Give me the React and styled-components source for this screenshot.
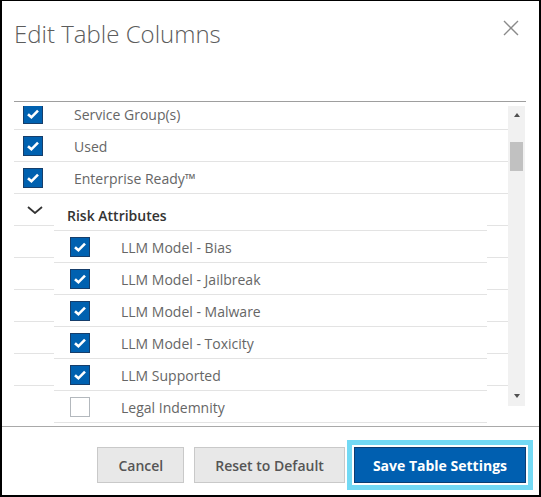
import styled, { createGlobalStyle } from 'styled-components';
import { useLayoutEffect, useRef } from 'react';

const GlobalStyle = createGlobalStyle`
  html, body {
    margin: 0;
    padding: 0;
    background: #fff;
  }
  body {
    font-family: "Open Sans", "Liberation Sans", sans-serif;
  }
`;

const topColumns = [
  { label: 'Service Group(s)', checked: true },
  { label: 'Used', checked: true },
  { label: 'Enterprise Ready™', checked: true },
];

const riskAttributes = [
  { label: 'LLM Model - Bias', checked: true },
  { label: 'LLM Model - Jailbreak', checked: true },
  { label: 'LLM Model - Malware', checked: true },
  { label: 'LLM Model - Toxicity', checked: true },
  { label: 'LLM Supported', checked: true },
  { label: 'Legal Indemnity', checked: false },
];

function CheckBox({ checked }) {
  return (
    <Box $checked={checked}>
      {checked && (
        <svg width="20" height="20" viewBox="0 0 20 20">
          <path d="M5 10.2 L8.4 13.3 L15 6.6" fill="none" stroke="#fff" strokeWidth="2.6" />
        </svg>
      )}
    </Box>
  );
}

export default function App() {
  const viewport = useRef();

  useLayoutEffect(() => {
    viewport.current.scrollTop = 8;
  }, []);

  return (<>
    <GlobalStyle />
    <Dialog>
      <Header>
        <Title>Edit Table Columns</Title>
        <CloseButton aria-label="Close">
          <svg width="16" height="16" viewBox="0 0 16 16">
            <path d="M1 1 L15 15 M15 1 L1 15" stroke="#8a8a8a" strokeWidth="1.4" fill="none" />
          </svg>
        </CloseButton>
      </Header>

      <ListWrap>
        <Viewport ref={viewport}>
          {topColumns.map((col) => (
            <Row key={col.label}>
              <CheckCell><CheckBox checked={col.checked} /></CheckCell>
              <Label>{col.label}</Label>
            </Row>
          ))}

          <Group>
            <SideCol $width={40}>
              <SideCell><Chevron /></SideCell>
              {riskAttributes.slice(1).map((a) => <SideCell key={a.label} />)}
              <SideCell $last />
            </SideCol>
            <GroupBody>
              <GroupHeader>Risk Attributes</GroupHeader>
              {riskAttributes.map((a) => (
                <ChildRow key={a.label}>
                  <CheckBox checked={a.checked} />
                  <Label>{a.label}</Label>
                </ChildRow>
              ))}
            </GroupBody>
            <SideCol $width={21}>
              <SideCell />
              {riskAttributes.slice(1).map((a) => <SideCell key={a.label} />)}
              <SideCell $last />
            </SideCol>
          </Group>
        </Viewport>

        <ScrollBar>
          <Arrow $dir="up" />
          <Thumb />
          <Arrow $dir="down" />
        </ScrollBar>
      </ListWrap>

      <Footer>
        <Button $pad={20}>Cancel</Button>
        <Button $pad={20}>Reset to Default</Button>
        <PrimaryButton $pad={18}>Save Table Settings</PrimaryButton>
      </Footer>
    </Dialog>
  </>);
}

function Chevron() {
  return (
    <svg width="16" height="8" viewBox="0 0 16 8">
      <path d="M1 1 L8 7 L15 1" fill="none" stroke="#333" strokeWidth="1.8" />
    </svg>
  );
}

const Dialog = styled.div`
  box-sizing: border-box;
  width: 541px;
  height: 497px;
  border: 2px solid #000;
  border-top-width: 1px;
  display: flex;
  flex-direction: column;
  background: #fff;
`;

const Header = styled.div`
  box-sizing: border-box;
  height: 100px;
  padding: 17px 20px 0 12px;
  display: flex;
  justify-content: space-between;
  align-items: flex-start;
`;

const Title = styled.h2`
  margin: 0;
  font-size: 24px;
  line-height: 32px;
  font-weight: 300;
  color: #5c5c5c;
`;

const CloseButton = styled.button`
  border: none;
  background: none;
  padding: 0;
  margin-top: 2px;
  width: 16px;
  height: 16px;
  cursor: pointer;
  display: flex;
`;

const ListWrap = styled.div`
  position: relative;
  margin: 0 13px 0 12px;
  padding-top: 4px;
  border-top: 1px solid #9e9e9e;
`;

const Viewport = styled.div`
  height: 320px;
  overflow-y: scroll;
  padding-right: 18px;
  padding-bottom: 32px;
  box-sizing: border-box;
  scrollbar-width: none;
  &::-webkit-scrollbar { display: none; }
`;

const Row = styled.div`
  box-sizing: border-box;
  height: 32px;
  display: flex;
  align-items: center;
  border-bottom: 1px solid #e3e3e3;
`;

const CheckCell = styled.div`
  width: 60px;
  padding-left: 9px;
  box-sizing: border-box;
  display: flex;
`;

const Label = styled.span`
  font-size: 14px;
  color: #666;
  padding-top: 2px;
`;

const Box = styled.span`
  box-sizing: border-box;
  width: 20px;
  height: 20px;
  flex: none;
  display: flex;
  align-items: center;
  justify-content: center;
  background: ${(p) => (p.$checked ? '#0061b0' : '#fff')};
  border: 1px solid ${(p) => (p.$checked ? '#163e6b' : '#b3b8bd')};
  svg { margin: -1px; }
`;

const Group = styled.div`
  display: flex;
`;

const SideCol = styled.div`
  width: ${(p) => p.$width}px;
  flex: none;
  display: flex;
  flex-direction: column;
`;

const SideCell = styled.div`
  box-sizing: border-box;
  height: ${(p) => (p.$last ? 'auto' : '32px')};
  flex: ${(p) => (p.$last ? '1' : 'none')};
  border-bottom: ${(p) => (p.$last ? 'none' : '1px solid #e3e3e3')};
  display: flex;
  align-items: center;
  justify-content: center;
  padding-left: 2px;
`;

const GroupBody = styled.div`
  flex: 1;
`;

const GroupHeader = styled.div`
  box-sizing: border-box;
  height: 37px;
  padding: 12px 0 0 13px;
  line-height: 20px;
  font-size: 14px;
  font-weight: 600;
  color: #333;
  border-bottom: 1px solid #e3e3e3;
`;

const ChildRow = styled(Row)`
  padding-left: 16px;
  gap: 31px;
`;

const ScrollBar = styled.div`
  position: absolute;
  top: 4px;
  right: 1px;
  width: 17px;
  height: 300px;
  background: #f1f1f1;
  display: flex;
  flex-direction: column;
  align-items: center;
`;

const Arrow = styled.div`
  width: 0;
  height: 0;
  border-left: 3.5px solid transparent;
  border-right: 3.5px solid transparent;
  ${(p) => (p.$dir === 'up'
    ? 'border-bottom: 4px solid #505050; margin-top: 7px;'
    : 'border-top: 4px solid #505050; margin-top: auto; margin-bottom: 8px;')}
`;

const Thumb = styled.div`
  width: 13px;
  height: 29px;
  margin-top: 25px;
  background: #c1c1c1;
`;

const Footer = styled.div`
  box-sizing: border-box;
  height: 69px;
  border-top: 1px solid #a9a9a9;
  padding: 20px 13px 0 0;
  display: flex;
  justify-content: flex-end;
  align-items: flex-start;
  gap: 9px;
  & > :first-child { margin-right: 1px; }
`;

const Button = styled.button`
  box-sizing: border-box;
  height: 36px;
  padding: 0 ${(p) => p.$pad}px;
  font-family: "Open Sans", "Liberation Sans", sans-serif;
  font-size: 14px;
  font-weight: 600;
  color: #555;
  background: #e8e8e8;
  border: 1px solid #c9c9c9;
  cursor: pointer;
`;

const PrimaryButton = styled(Button)`
  color: #fff;
  font-weight: 700;
  background: #005fb0;
  border-color: #0d3d72;
  box-shadow: 0 0 0 2px #fff, 0 0 0 7px #72d9f4;
`;
